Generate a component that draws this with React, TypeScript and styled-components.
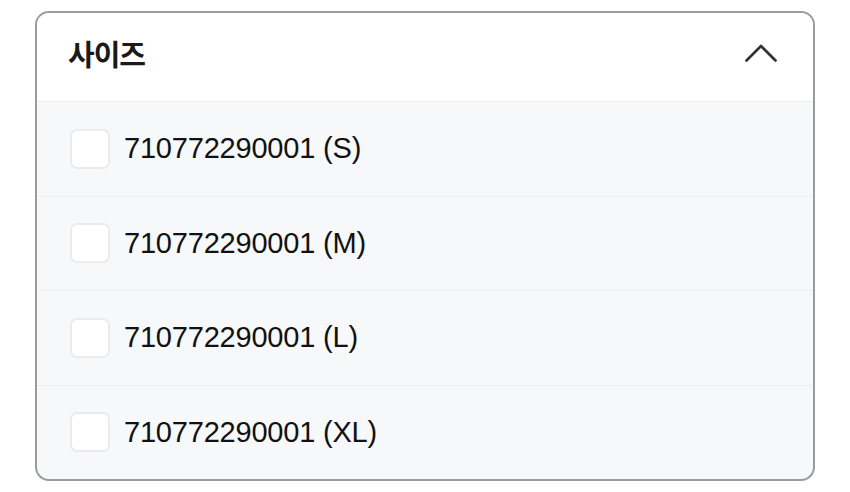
import * as React from "react";
import { createGlobalStyle, styled } from "styled-components";

const GlobalStyle = createGlobalStyle`
    html, body {
        margin: 0;
        padding: 0;
        background: #ffffff;
    }
    body {
        font-family: "Liberation Sans", "Noto Sans CJK KR", sans-serif;
        color: #111111;
    }
`;

const sizes = ["S", "M", "L", "XL"];

const Page = styled.div`
    padding: 11px 35px 0 35px;
`;

const Panel = styled.section`
    width: 780px;
    height: 470px;
    box-sizing: border-box;
    border: 2px solid #9b9b9b;
    border-radius: 14px;
    overflow: hidden;
    display: flex;
    flex-direction: column;
    background: #f7f8fa;
`;

const Header = styled.header`
    height: 89px;
    flex: none;
    display: flex;
    align-items: center;
    justify-content: space-between;
    padding: 0 36px 8px 31px;
    box-sizing: border-box;
    background: #ffffff;
    border-bottom: 1px solid #ebecef;
`;

const Title = styled.h2`
    margin: 0;
    font-family: "Noto Sans CJK KR", sans-serif;
    font-size: 29px;
    font-weight: 700;
    letter-spacing: -1px;
    color: #1a1a1a;
`;

const ToggleButton = styled.button`
    border: none;
    background: none;
    padding: 0;
    display: flex;
    color: #333333;
    cursor: pointer;
`;

const List = styled.ul`
    list-style: none;
    margin: 0;
    padding: 0;
    flex: 1;
    display: flex;
    flex-direction: column;
`;

const Row = styled.li<{ $last?: boolean }>`
    flex: 1;
    display: flex;
    align-items: center;
    gap: 14px;
    padding: 0 33px;
    border-bottom: ${(p) => (p.$last ? "none" : "1px solid #eceef1")};
`;

const Box = styled.span`
    width: 40px;
    height: 40px;
    box-sizing: border-box;
    border: 2px solid #ebebeb;
    border-radius: 7px;
    background: #ffffff;
    flex: none;
`;

const Label = styled.span`
    font-size: 29px;
    color: #111111;
    letter-spacing: -0.2px;
`;

const App = () => {
    return (
        <>
            <GlobalStyle />
            <Page>
                <Panel>
                    <Header>
                        <Title>사이즈</Title>
                        <ToggleButton aria-label="접기">
                            <svg width="32" height="18" viewBox="0 0 32 18" fill="none">
                                <path d="M1.5 16.5 L16 2 L30.5 16.5" stroke="currentColor" strokeWidth="2.7" strokeLinecap="round" strokeLinejoin="round" />
                            </svg>
                        </ToggleButton>
                    </Header>
                    <List>
                        {sizes.map((s, i) => (
                            <Row key={s} $last={i === sizes.length - 1}>
                                <Box />
                                <Label>710772290001 ({s})</Label>
                            </Row>
                        ))}
                    </List>
                </Panel>
            </Page>
        </>
    );
};

export default App;
